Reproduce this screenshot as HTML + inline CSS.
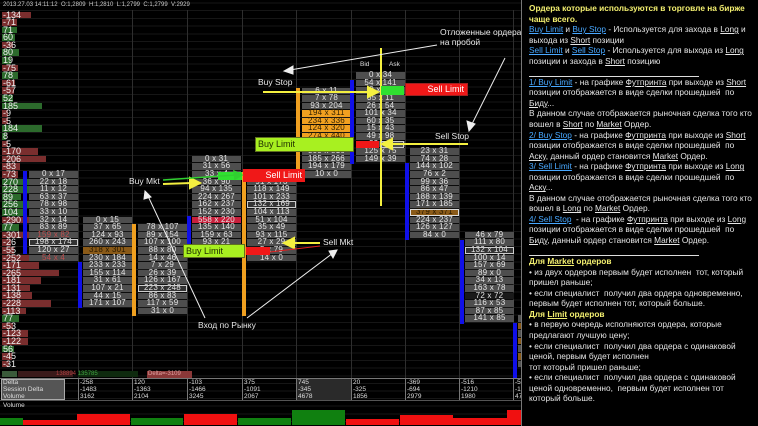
<!DOCTYPE html>
<html><head><meta charset="utf-8"><style>
*{margin:0;padding:0;box-sizing:border-box}
body{width:758px;height:426px;overflow:hidden;background:#000;font-family:"Liberation Sans","DejaVu Sans",sans-serif;position:relative}
.a{position:absolute}
#chart{position:absolute;left:0;top:0;width:521px;height:426px;background:#000;
background-image:repeating-linear-gradient(to bottom,transparent 0,transparent 6.6px,#161616 6.6px,#161616 7.6px);background-position:0 11.5px}
.vl{position:absolute;top:10px;width:1px;height:368px;background:#2e2e2e}
.col{position:absolute;width:49px;font-size:8px;line-height:6.6px;color:#e4e4e4;text-align:center;letter-spacing:.2px}
.col div{height:6.6px;margin-bottom:1px;background:#4e4e4e}
.col .o{background:#f0a020;color:#332200}
.col .b{background:#8a5a18;color:#2a1a00}
.col .r{background:#c8203c}
.col .w{outline:1px solid #ccc;outline-offset:-1px;background:#333}
.col .k{background:#1a1a1a}
.bb{position:absolute;width:4px;background:#1010e8}
.ob{position:absolute;width:4px;background:#f0a020}
.hist div{height:6.6px;margin-bottom:1px;font-size:9px;line-height:7px;color:#f0f0f0;padding-left:1px}
.hist .n{background:#7a2e2e}
.hist .p{background:#2c6a2c}
.lbl{position:absolute;color:#e8e8e8;font-size:8.5px;white-space:nowrap}
#rp{position:absolute;left:521px;top:0;width:237px;height:426px;background:#000;border-left:1px solid #777;padding:3px 0 0 7px;font-size:8.3px;line-height:10.55px;color:#e6e6e6;white-space:nowrap}
#rp .y{color:#f4f070;font-weight:bold}
#rp .u{color:#48a8ff;text-decoration:underline}
#rp .l{text-decoration:underline}
#rp .hr{height:10.55px;border-bottom:1px solid #ddd;width:170px;margin-bottom:0}
.tb{position:absolute;font-size:6.5px;line-height:7px;color:#ddd}
</style></head><body>
<div id="chart">
<div class="a" style="left:3px;top:2px;font-size:6px;color:#ccc">2013.27.03 14:11:12 &nbsp;O:1,2809 &nbsp;H:1,2810 &nbsp;L:1,2799 &nbsp;C:1,2799 &nbsp;V:2929</div>
<div class="vl" style="left:78px"></div><div class="vl" style="left:132px"></div><div class="vl" style="left:187px"></div><div class="vl" style="left:242px"></div><div class="vl" style="left:296px"></div><div class="vl" style="left:351px"></div><div class="vl" style="left:405px"></div><div class="vl" style="left:459px"></div><div class="vl" style="left:513px"></div>

<div class="a hist" style="left:2px;top:11.5px">
<div class="n" style="width:29px">-134</div><div class="n" style="width:15px">-71</div><div class="p" style="width:15px">71</div><div class="p" style="width:13px">60</div><div class="n" style="width:11px">-36</div><div class="p" style="width:17px">80</div><div class="p" style="width:9px">19</div><div class="n" style="width:16px">-75</div><div class="p" style="width:16px">78</div><div class="n" style="width:13px">-61</div><div class="n" style="width:12px">-57</div><div class="p" style="width:11px">52</div><div class="p" style="width:40px">185</div><div class="n" style="width:6px">-9</div><div class="n" style="width:6px">-5</div><div class="p" style="width:40px">184</div><div class="p" style="width:4px">8</div><div class="n" style="width:6px">-5</div><div class="n" style="width:36px">-170</div><div class="n" style="width:44px">-206</div><div class="n" style="width:18px">-83</div><div class="n" style="width:16px">-73</div><div class="p" style="width:58px">270</div><div class="p" style="width:49px">228</div><div class="p" style="width:19px">89</div><div class="p" style="width:55px">256</div><div class="p" style="width:22px">104</div><div class="n" style="width:62px">-290</div><div class="p" style="width:17px">77</div><div class="n" style="width:65px">-301</div><div class="n" style="width:9px">-26</div><div class="n" style="width:12px">-55</div><div class="n" style="width:54px">-252</div><div class="n" style="width:37px">-171</div><div class="n" style="width:57px">-265</div><div class="n" style="width:39px">-181</div><div class="n" style="width:28px">-131</div><div class="n" style="width:30px">-138</div><div class="n" style="width:49px">-228</div><div class="n" style="width:24px">-113</div><div class="p" style="width:17px">77</div><div class="n" style="width:11px">-53</div><div class="n" style="width:26px">-123</div><div class="n" style="width:26px">-122</div><div class="p" style="width:12px">56</div><div class="n" style="width:10px">-45</div><div class="n" style="width:7px">-31</div>
</div>

<div class="bb" style="left:23px;top:171px;height:83px"></div>
<div class="col" style="left:29px;top:171.1px"><div>0 x 17</div><div>22 x 18</div><div>11 x 12</div><div>63 x 37</div><div>78 x 98</div><div>33 x 10</div><div>32 x 14</div><div>83 x 89</div><div style="color:#c05050">159 x 82</div><div class="w">198 x 174</div><div>120 x 27</div><div style="color:#c05050">54 x 4</div></div>

<div class="bb" style="left:78px;top:262px;height:46px"></div>
<div class="col" style="left:83px;top:216.7px"><div>0 x 15</div><div>37 x 65</div><div>124 x 93</div><div>260 x 243</div><div class="b">318 x 301</div><div>230 x 184</div><div>233 x 233</div><div>155 x 114</div><div>31 x 61</div><div>107 x 21</div><div>44 x 15</div><div>171 x 107</div></div>
<div class="ob" style="left:132px;top:224px;height:92px"></div>
<div class="col" style="left:138px;top:224.3px"><div>78 x 107</div><div>89 x 154</div><div>107 x 100</div><div>88 x 80</div><div>14 x 46</div><div>7 x 29</div><div>26 x 39</div><div>126 x 167</div><div class="w">223 x 248</div><div>86 x 83</div><div>117 x 59</div><div>31 x 0</div></div>

<div class="bb" style="left:187px;top:216px;height:30px"></div>
<div class="col" style="left:192px;top:155.9px"><div>0 x 31</div><div>31 x 56</div><div>33 x 4</div><div>36 x 90</div><div>94 x 135</div><div>224 x 267</div><div>162 x 237</div><div>152 x 230</div><div class="r">558 x 220</div><div>135 x 140</div><div>159 x 63</div><div>93 x 21</div></div>
<div class="ob" style="left:242px;top:172px;height:144px"></div>
<div class="col" style="left:247px;top:171.1px"><div>5 x 10</div><div>91 x 173</div><div>118 x 149</div><div>101 x 233</div><div class="w">132 x 169</div><div>104 x 113</div><div>51 x 104</div><div>35 x 49</div><div>93 x 115</div><div>27 x 29</div><div>5 x 79</div><div>14 x 0</div></div>

<div class="ob" style="left:296px;top:88px;height:84px"></div>
<div class="col" style="left:302px;top:87.5px"><div>6 x 11</div><div>7 x 78</div><div>93 x 204</div><div class="o">194 x 311</div><div class="o">234 x 336</div><div class="o">124 x 320</div><div class="o">274 x 440</div><div>309 x 816</div><div>309 x 816</div><div>185 x 266</div><div>194 x 179</div><div>10 x 0</div></div>

<div class="bb" style="left:350px;top:80px;height:84px"></div>
<div class="a" style="left:360px;top:61px;font-size:6.5px;color:#ddd">Bid</div>
<div class="a" style="left:389px;top:61px;font-size:6.5px;color:#ddd">Ask</div>
<div class="col" style="left:356px;top:72.3px"><div>0 x 34</div><div>54 x 141</div><div>9 x 11</div><div>35 x 11</div><div>26 x 54</div><div>101 x 34</div><div>60 x 35</div><div>15 x 43</div><div>49 x 98</div><div>22 x 4</div><div>125 x 75</div><div>149 x 39</div></div>

<div class="bb" style="left:405px;top:163px;height:77px"></div>
<div class="col" style="left:410px;top:148.3px"><div>23 x 31</div><div>74 x 28</div><div>144 x 102</div><div>76 x 2</div><div>99 x 36</div><div>86 x 47</div><div>188 x 139</div><div>171 x 185</div><div class="b" style="outline:1px solid #ddd;outline-offset:-1px">379 x 371</div><div>224 x 237</div><div>126 x 127</div><div>84 x 0</div></div>

<div class="bb" style="left:460px;top:240px;height:84px"></div>
<div class="col" style="left:465px;top:231.9px"><div>46 x 79</div><div>111 x 80</div><div class="w">132 x 104</div><div>100 x 14</div><div>157 x 69</div><div>89 x 0</div><div>34 x 13</div><div>163 x 78</div><div class="k">72 x 72</div><div>116 x 53</div><div>87 x 85</div><div>141 x 85</div></div>
<div class="bb" style="left:513px;top:323px;height:56px"></div>
<div class="col" style="left:518px;top:315px;width:4px"><div style="background:#555"></div><div style="background:#8a5a18"></div><div style="background:#555"></div><div style="background:#8a5a18"></div><div style="background:#555"></div><div style="background:#8a5a18"></div><div style="background:#555"></div></div>

<!-- overlays -->
<div class="a" style="left:380px;top:48px;width:2px;height:158px;background:#f4f040"></div>
<div class="a" style="left:381px;top:86px;width:23px;height:9px;background:#30e030"></div>
<div class="a" style="left:405px;top:83px;width:63px;height:13px;background:#f01818;border:1px solid #a02020;color:#fff;font-size:9px;line-height:11px;text-align:right;padding-right:3px">Sell Limit</div>
<div class="a" style="left:255px;top:137px;width:99px;height:15px;background:#a8f020;border:1px solid #607020;color:#203000;font-size:9px;line-height:13px;padding-left:2px">Buy Limit</div>
<div class="a" style="left:356px;top:141px;width:23px;height:7px;background:#f01818"></div>
<div class="a" style="left:381px;top:141px;width:23px;height:7px;border:1px solid #ccc"></div>
<div class="a" style="left:218px;top:172px;width:24px;height:8px;background:#30e030"></div>
<div class="a" style="left:243px;top:169px;width:62px;height:13px;background:#f01818;color:#fff;font-size:9px;line-height:13px;text-align:right;padding-right:3px">Sell Limit</div>
<div class="a" style="left:183px;top:244px;width:62px;height:14px;background:#a8f020;border:1px solid #607020;color:#203000;font-size:9px;line-height:12px;padding-left:2px">Buy Limit</div>
<div class="a" style="left:246px;top:247px;width:24px;height:8px;background:#f01818"></div>

<div class="lbl" style="left:258px;top:77px">Buy Stop</div>
<div class="lbl" style="left:435px;top:131px">Sell Stop</div>
<div class="lbl" style="left:440px;top:27px;line-height:10px">Отложенные ордера<br>на пробой</div>
<div class="lbl" style="left:129px;top:176px">Buy Mkt</div>
<div class="lbl" style="left:323px;top:237px">Sell Mkt</div>
<div class="lbl" style="left:198px;top:320px">Вход по Рынку</div>

<svg class="a" style="left:0;top:0" width="521" height="426">
<g stroke="#eee" stroke-width="1" fill="#eee">
<line x1="437" y1="45" x2="290" y2="70"/><polygon points="284,71 293,66 293,74"/>
<line x1="505" y1="58" x2="471" y2="126"/><polygon points="469,131 467,121 475,124"/>
<line x1="205" y1="318" x2="148" y2="196"/><polygon points="145,191 151,197 144,199"/>
<line x1="247" y1="318" x2="333" y2="253"/><polygon points="337,250 333,258 329,251"/>
</g>
<g stroke="#f4f040" stroke-width="2" fill="#f4f040">
<line x1="263" y1="92" x2="370" y2="92"/><polygon points="378,92 368,87 368,97"/>
<line x1="468" y1="144" x2="390" y2="144"/><polygon points="382,144 392,139 392,149"/>
<line x1="163" y1="184" x2="192" y2="183"/><polygon points="200,183 190,178 190,188"/>
<line x1="320" y1="243" x2="294" y2="243"/><polygon points="284,243 294,238 294,248"/>
</g>
<g stroke="#30d030" stroke-width="1.5" fill="#30d030">
<line x1="163" y1="180" x2="236" y2="175"/><polygon points="242,175 234,171 235,179"/>
</g>
<line x1="320" y1="246" x2="270" y2="252" stroke="#e02020" stroke-width="1"/>
</svg>

<div class="a" style="left:2px;top:371px;width:15px;height:6px;background:#3a5a3a"></div>
<div class="a" style="left:18px;top:371px;width:55px;height:6px;background:#3a1a1a"></div>
<div class="a" style="left:78px;top:371px;width:60px;height:6px;background:#0e2a0e"></div>
<div class="a" style="left:56px;top:371px;font-size:6px;color:#b04040">138894 <span style="color:#40a040">135785</span></div>
<div class="a" style="left:147px;top:371px;width:45px;height:7px;background:#8a3838;font-size:6px;color:#e0a0a0;padding-left:1px">Delta=-3109</div>

<div class="a" style="left:0;top:378px;width:521px;height:23px;border-top:1px solid #777;border-bottom:1px solid #555"></div>
<div class="a" style="left:1px;top:379px;width:64px;height:21px;background:#555;border:1px solid #aaa"></div>
<div class="tb" style="left:3px;top:379px">Delta<br>Session Delta<br>Volume</div>
<div class="tb" style="left:78px;top:379px;border-left:1px solid #777;padding-left:1px">-258<br>-1483<br>3162</div>
<div class="tb" style="left:132px;top:379px;border-left:1px solid #777;padding-left:1px">120<br>-1363<br>2104</div>
<div class="tb" style="left:187px;top:379px;border-left:1px solid #777;padding-left:1px">-103<br>-1466<br>3245</div>
<div class="tb" style="left:242px;top:379px;border-left:1px solid #777;padding-left:1px">375<br>-1091<br>2067</div>
<div class="tb" style="left:296px;top:379px;border-left:1px solid #777;padding-left:1px;width:55px;background:#2a2a2a">745<br>-345<br>4678</div>
<div class="tb" style="left:351px;top:379px;border-left:1px solid #777;padding-left:1px">20<br>-325<br>1856</div>
<div class="tb" style="left:405px;top:379px;border-left:1px solid #777;padding-left:1px">-369<br>-694<br>2979</div>
<div class="tb" style="left:459px;top:379px;border-left:1px solid #777;padding-left:1px">-516<br>-1210<br>1980</div>
<div class="tb" style="left:513px;top:379px;border-left:1px solid #777;padding-left:1px">-55<br>-17<br>472</div>
<div class="a" style="left:3px;top:402px;font-size:6.5px;color:#ddd">Volume</div>
<div class="a" style="left:0;top:418px;width:23px;height:7px;background:#108010"></div>
<div class="a" style="left:23px;top:420px;width:54px;height:5px;background:#f01010"></div>
<div class="a" style="left:77px;top:414px;width:53px;height:11px;background:#f01010"></div>
<div class="a" style="left:131px;top:418px;width:52px;height:7px;background:#108010"></div>
<div class="a" style="left:184px;top:414px;width:53px;height:11px;background:#f01010"></div>
<div class="a" style="left:238px;top:418px;width:53px;height:7px;background:#108010"></div>
<div class="a" style="left:292px;top:410px;width:53px;height:15px;background:#108010"></div>
<div class="a" style="left:346px;top:419px;width:53px;height:6px;background:#f01010"></div>
<div class="a" style="left:400px;top:415px;width:53px;height:10px;background:#f01010"></div>
<div class="a" style="left:453px;top:418px;width:54px;height:7px;background:#f01010"></div>
<div class="a" style="left:507px;top:410px;width:14px;height:15px;background:#f01010"></div>
</div>

<div id="rp">
<div class="y">Ордера которые используются в торговле на бирже</div>
<div class="y">чаще всего.</div>
<div><span class="u">Buy Limit</span> и <span class="u">Buy Stop</span> - Используется для захода в <span class="l">Long</span> и</div>
<div>выхода из <span class="l">Short</span> позиции</div>
<div><span class="u">Sell Limit</span> и <span class="u">Sell Stop</span> - Используется для выхода из <span class="l">Long</span></div>
<div>позиции и захода в <span class="l">Short</span> позицию</div>
<div class="hr"></div>
<div><span class="u">1/ Buy Limit</span> - на графике <span class="l">Футпринта</span> при выходе из <span class="l">Short</span></div>
<div>позиции отображается в виде сделки прошедшей &nbsp;по</div>
<div><span class="l">Биду</span>...</div>
<div>В данном случае отображается рыночная сделка того кто</div>
<div>вошел в <span class="l">Short</span> по <span class="l">Market</span> Ордер.</div>
<div><span class="u">2/ Buy Stop</span> - на графике <span class="l">Футпринта</span> при выходе из <span class="l">Short</span></div>
<div>позиции отображается в виде сделки прошедшей &nbsp;по</div>
<div><span class="l">Аску</span>, данный ордер становится <span class="l">Market</span> Ордер.</div>
<div><span class="u">3/ Sell Limit</span> - на графике <span class="l">Футпринта</span> при выходе из <span class="l">Long</span></div>
<div>позиции отображается в виде сделки прошедшей &nbsp;по</div>
<div><span class="l">Аску</span>...</div>
<div>В данном случае отображается рыночная сделка того кто</div>
<div>вошел в <span class="l">Long</span> по <span class="l">Market</span> Ордер.</div>
<div><span class="u">4/ Sell Stop</span> &nbsp;- на графике <span class="l">Футпринта</span> при выходе из <span class="l">Long</span></div>
<div>позиции отображается в виде сделки прошедшей &nbsp;по</div>
<div><span class="l">Биду</span>, данный ордер становится <span class="l">Market</span> Ордер.</div>
<div class="hr"></div>
<div class="y">Для <span class="l">Market</span> ордеров</div>
<div>• из двух ордеров первым будет исполнен &nbsp;тот, который</div>
<div>пришел раньше;</div>
<div>• если специалист &nbsp;получил два ордера одновременно,</div>
<div>первым будет исполнен тот, который больше.</div>
<div class="y">Для <span class="l">Limit</span> ордеров</div>
<div>• в первую очередь исполняются ордера, которые</div>
<div>предлагают лучшую цену;</div>
<div>• если специалист &nbsp;получил два ордера с одинаковой</div>
<div>ценой, первым будет исполнен</div>
<div>тот который пришел раньше;</div>
<div>• если специалист &nbsp;получил два ордера с одинаковой</div>
<div>ценой одновременно, &nbsp;первым будет исполнен тот</div>
<div>который больше.</div>
</div>
</body></html>
